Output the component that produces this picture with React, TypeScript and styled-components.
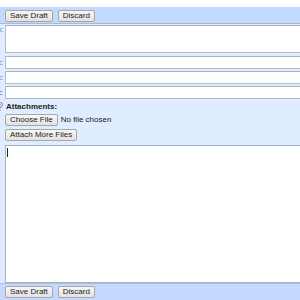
import React from "react";
import styled, { createGlobalStyle } from "styled-components";

const GlobalStyle = createGlobalStyle`
  html, body {
    margin: 0;
    padding: 0;
    background: #ffffff;
    overflow: hidden;
  }
  body {
    font-family: "Liberation Sans", Arial, sans-serif;
    font-size: 8px;
    color: #222;
  }
`;

const Page = styled.div`
  width: 360px;
  padding-top: 7px;
`;

const Toolbar = styled.div<{ $position: "top" | "bottom" }>`
  display: flex;
  gap: 5px;
  background: #c3d9ff;
  padding: ${(p) => (p.$position === "top" ? "3px 0 1px 5px" : "2px 0 2px 5px")};
  ${(p) =>
    p.$position === "top"
      ? "border-bottom: 1px solid #a9b9d2;"
      : "border-top: 1px solid #b3bdca;"}
`;

const Button = styled.button`
  font-family: "Liberation Sans", Arial, sans-serif;
  font-size: 8px;
  line-height: 10px;
  height: 12px;
  padding: 0 4px;
  margin: 0;
  border: 1px solid #a6a6a6;
  border-radius: 2px;
  background: linear-gradient(#f7f7f7, #e2e2e2);
  color: #222;
  white-space: nowrap;
  display: inline-flex;
  align-items: center;
`;

const Form = styled.div`
  background: #e0ecff;
  padding-top: 1px;
  display: flex;
  flex-direction: column;
`;

const Row = styled.div<{ $gap?: number; $align?: string }>`
  display: flex;
  align-items: ${(p) => p.$align ?? "center"};
  margin-top: ${(p) => p.$gap ?? 0}px;
`;

const Label = styled.div`
  width: 5px;
  flex: none;
  overflow: hidden;
  display: flex;
  justify-content: flex-end;
  padding-right: 2px;
  box-sizing: border-box;
  white-space: nowrap;
  color: #333;
  line-height: 10px;
`;

const Field = styled.div<{ $height: number }>`
  flex: 1;
  height: ${(p) => p.$height}px;
  box-sizing: border-box;
  background: #ffffff;
  border: 1px solid #b4bcc8;
  border-top-color: #a9b1bf;
`;

const Attachments = styled.div`
  flex: 1;
  display: flex;
  flex-direction: column;
  padding: 3px 0 4px 0;
  gap: 2px;
`;

const AttachTitle = styled.div`
  font-weight: bold;
  line-height: 10px;
  padding-left: 1px;
  color: #222;
`;

const FileLine = styled.div<{ $gap?: number }>`
  display: flex;
  align-items: center;
  gap: 3px;
  margin-top: ${(p) => p.$gap ?? 0}px;
`;

const FileStatus = styled.span`
  color: #222;
  line-height: 10px;
`;

const Clip = styled.svg`
  flex: none;
  margin-top: 2px;
`;

const Body = styled.div`
  flex: 1;
  height: 138px;
  box-sizing: border-box;
  background: #ffffff;
  border: 1px solid #a3b3c8;
  padding: 2px 0 0 1px;
`;

const Caret = styled.span`
  display: block;
  width: 1px;
  height: 9px;
  background: #222;
`;

export default function App() {
  return (
    <Page>
      <GlobalStyle />
      <Toolbar $position="top">
        <Button>Save Draft</Button>
        <Button>Discard</Button>
      </Toolbar>
      <Form>
        <Row $align="flex-start">
          <Label>To:</Label>
          <Field $height={28} />
        </Row>
        <Row $gap={3}>
          <Label>Cc:</Label>
          <Field $height={13} />
        </Row>
        <Row $gap={2}>
          <Label>Bcc:</Label>
          <Field $height={13} />
        </Row>
        <Row $gap={2}>
          <Label>Subject:</Label>
          <Field $height={13} />
        </Row>
        <Row $align="flex-start">
          <Label>
            <Clip width="8" height="10" viewBox="0 0 8 10">
              <path
                d="M5.5 3.5 L2.8 6.6 a1 1 0 0 0 1.4 1.4 L7 4.8 a2 2 0 0 0 -2.8 -2.8 L1.3 5.2 a3 3 0 0 0 4.2 4.2"
                fill="none"
                stroke="#7a7a7a"
                strokeWidth="1"
              />
            </Clip>
          </Label>
          <Attachments>
            <AttachTitle>Attachments:</AttachTitle>
            <FileLine>
              <Button>Choose File</Button>
              <FileStatus>No file chosen</FileStatus>
            </FileLine>
            <FileLine $gap={1}>
              <Button>Attach More Files</Button>
            </FileLine>
          </Attachments>
        </Row>
        <Row $align="flex-start">
          <Label />
          <Body>
            <Caret />
          </Body>
        </Row>
      </Form>
      <Toolbar $position="bottom">
        <Button>Save Draft</Button>
        <Button>Discard</Button>
      </Toolbar>
    </Page>
  );
}
